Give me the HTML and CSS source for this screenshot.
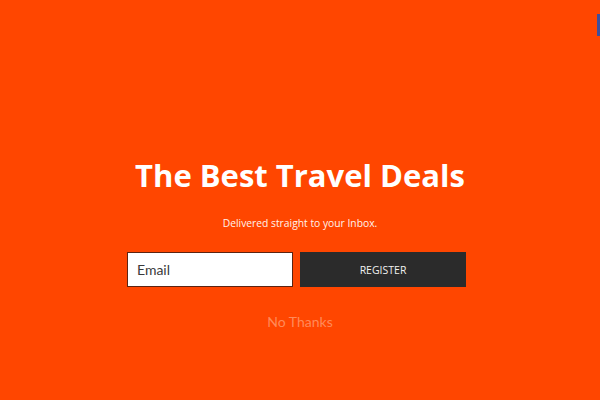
FILE: index.html
```html
<!DOCTYPE html>
<html>
<head>
<meta charset="utf-8">
<link rel="stylesheet" href="styles.css">
</head>
<body>
<div class="page">
  <h1 class="title">The Best Travel Deals</h1>
  <p class="subtitle">Delivered straight to your Inbox.</p>
  <form class="form">
    <input class="email" type="text" placeholder="Email">
    <button class="register" type="button">REGISTER</button>
  </form>
  <a class="nothanks">No Thanks</a>
</div>
<div class="tab"></div>
</body>
</html>
```
FILE: styles.css
```css
html, body {
  margin: 0;
  padding: 0;
  height: 100%;
}
body {
  background: #ff4600;
  font-family: "Open Sans", "Liberation Sans", sans-serif;
  overflow: hidden;
}
.page {
  height: 400px;
  display: flex;
  flex-direction: column;
  align-items: center;
  padding-top: 155px;
  box-sizing: border-box;
}
.title {
  margin: 0;
  color: #ffffff;
  font-weight: 700;
  font-size: 31px;
  line-height: 40px;
}
.subtitle {
  margin: 20px 0 0 0;
  color: #fff3ec;
  font-size: 10.3px;
  line-height: 16px;
}
.form {
  margin-top: 21px;
  margin-right: 7px;
  display: flex;
  gap: 7px;
}
.email {
  width: 166px;
  height: 35px;
  box-sizing: border-box;
  border: 1px solid #5b2412;
  background: #ffffff;
  padding: 0 9px;
  font-family: "Lato", "Open Sans", sans-serif;
  font-size: 14px;
  color: #333;
  outline: none;
}
.email::placeholder {
  color: #3a3a3a;
  opacity: 1;
}
.register {
  width: 166px;
  height: 35px;
  border: none;
  background: #2b2b2b;
  color: #f0f0f0;
  font-family: "Open Sans", sans-serif;
  font-size: 10.5px;
  padding: 0;
}
.nothanks {
  margin-top: 26px;
  font-family: "Lato", "Open Sans", sans-serif;
  font-size: 14px;
  color: #ff8a5a;
}
.tab {
  position: absolute;
  right: 0;
  top: 14px;
  width: 3px;
  height: 22px;
  background: #3d4f9c;
}
```
